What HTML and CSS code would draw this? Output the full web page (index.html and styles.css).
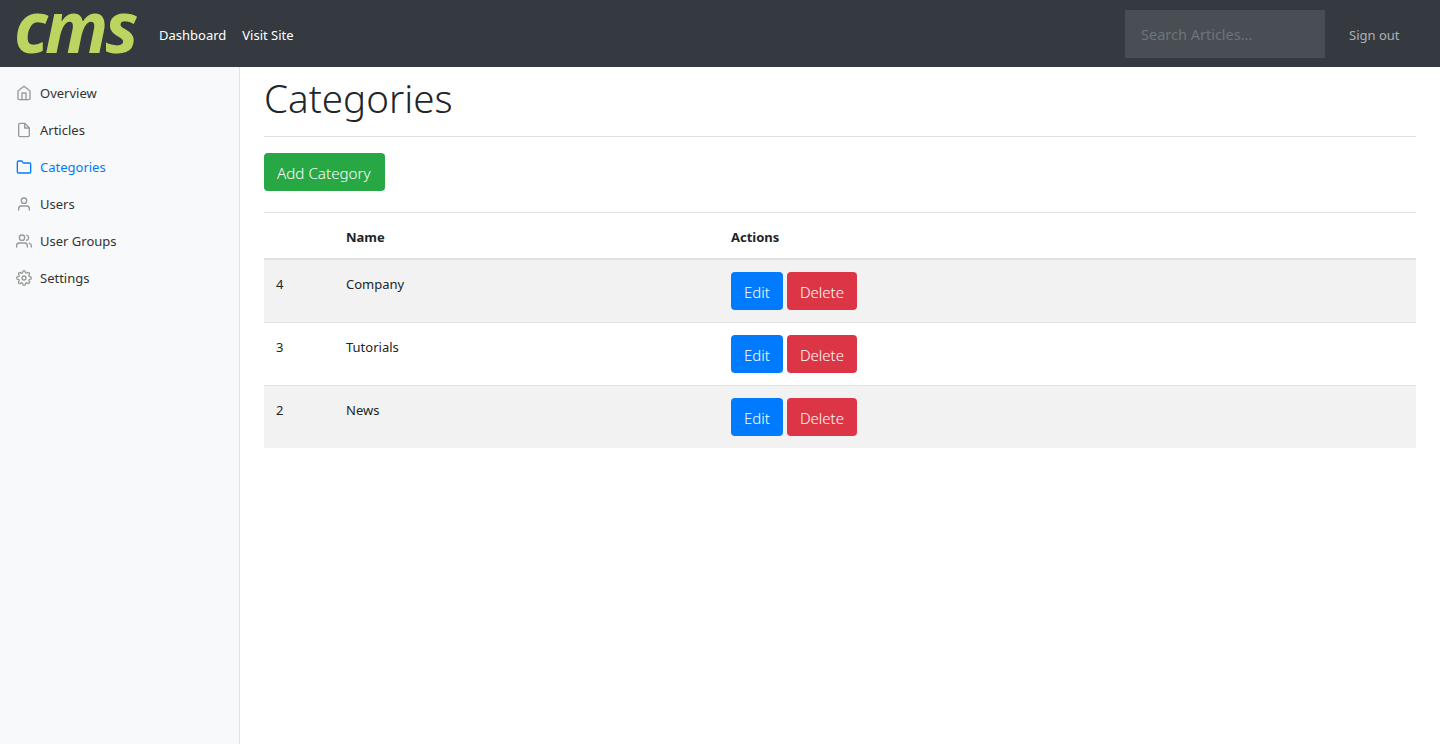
FILE: index.html
```html
<!DOCTYPE html>
<html lang="en">
<head>
<meta charset="utf-8">
<title>Categories</title>
<link rel="stylesheet" href="styles.css">
</head>
<body>
<header class="navbar">
  <a class="logo" href="#"><span class="logo-text">cms</span></a>
  <nav class="topnav"><a href="#">Dashboard</a><a href="#">Visit Site</a></nav>
  <input class="search" type="text" placeholder="Search Articles...">
  <a class="signout" href="#">Sign out</a>
</header>
<div class="layout">
  <aside class="sidebar">
    <a class="side-link" href="#"><svg class="icon" viewBox="0 0 24 24"><path d="M3 9l9-7 9 7v11a2 2 0 0 1-2 2H5a2 2 0 0 1-2-2z"/><path d="M9 22V12h6v10"/></svg>Overview</a>
    <a class="side-link" href="#"><svg class="icon" viewBox="0 0 24 24"><path d="M13 2H6a2 2 0 0 0-2 2v16a2 2 0 0 0 2 2h12a2 2 0 0 0 2-2V9z"/><path d="M13 2v7h7"/></svg>Articles</a>
    <a class="side-link active" href="#"><svg class="icon" viewBox="0 0 24 24"><path d="M22 19a2 2 0 0 1-2 2H4a2 2 0 0 1-2-2V5a2 2 0 0 1 2-2h5l2 3h9a2 2 0 0 1 2 2z"/></svg>Categories</a>
    <a class="side-link" href="#"><svg class="icon" viewBox="0 0 24 24"><path d="M20 21v-2a4 4 0 0 0-4-4H8a4 4 0 0 0-4 4v2"/><circle cx="12" cy="7" r="4"/></svg>Users</a>
    <a class="side-link" href="#"><svg class="icon" viewBox="0 0 24 24"><path d="M17 21v-2a4 4 0 0 0-4-4H5a4 4 0 0 0-4 4v2"/><circle cx="9" cy="7" r="4"/><path d="M23 21v-2a4 4 0 0 0-3-3.87"/><path d="M16 3.13a4 4 0 0 1 0 7.75"/></svg>User Groups</a>
    <a class="side-link" href="#"><svg class="icon" viewBox="0 0 24 24"><circle cx="12" cy="12" r="3"/><path d="M19.4 15a1.65 1.65 0 0 0 .33 1.82l.06.06a2 2 0 1 1-2.83 2.83l-.06-.06a1.65 1.65 0 0 0-2.82 1.17V21a2 2 0 1 1-4 0v-.09A1.65 1.65 0 0 0 7.2 19.7l-.06.06a2 2 0 1 1-2.83-2.83l.06-.06a1.65 1.65 0 0 0-1.17-2.82H3a2 2 0 1 1 0-4h.09A1.65 1.65 0 0 0 4.3 7.2l-.06-.06a2 2 0 1 1 2.83-2.83l.06.06a1.65 1.65 0 0 0 1.82.33H9a1.65 1.65 0 0 0 1-1.51V3a2 2 0 1 1 4 0v.09a1.65 1.65 0 0 0 2.82 1.17l.06-.06a2 2 0 1 1 2.83 2.83l-.06.06a1.65 1.65 0 0 0-.33 1.82V9a1.65 1.65 0 0 0 1.51 1H21a2 2 0 1 1 0 4h-.09a1.65 1.65 0 0 0-1.51 1z"/></svg>Settings</a>
  </aside>
  <main class="content">
    <h1 class="title">Categories</h1>
    <a class="btn green add" href="#">Add Category</a>
    <table class="table">
      <thead><tr><th class="col-id"></th><th class="col-name">Name</th><th>Actions</th></tr></thead>
      <tbody>
        <tr class="odd"><td>4</td><td>Company</td><td><div class="actions"><a class="btn blue" href="#">Edit</a><a class="btn red" href="#">Delete</a></div></td></tr>
        <tr><td>3</td><td>Tutorials</td><td><div class="actions"><a class="btn blue" href="#">Edit</a><a class="btn red" href="#">Delete</a></div></td></tr>
        <tr class="odd"><td>2</td><td>News</td><td><div class="actions"><a class="btn blue" href="#">Edit</a><a class="btn red" href="#">Delete</a></div></td></tr>
      </tbody>
    </table>
  </main>
</div>
</body>
</html>
```
FILE: styles.css
```css
* { box-sizing: border-box; }
html, body { margin: 0; height: 100%; }
body { font-family: "Noto Sans", "Open Sans", sans-serif; color: #212529; background: #fff; font-size: 13px; overflow: hidden; }
a { text-decoration: none; color: inherit; }
.navbar { height: 67px; background: #343a40; display: flex; align-items: center; }
.logo { width: 159px; height: 67px; padding-left: 14px; color: #bbd660; }
.logo-text { display: block; font-weight: 700; font-style: italic; font-size: 72px; line-height: 51px; letter-spacing: -3px; transform: scaleX(.97); transform-origin: left; }
.topnav { display: flex; gap: 16px; color: #fff; padding-top: 2px; }
.search { margin-left: auto; width: 200px; height: 48px; padding: 0 16px; border: 0; background: rgba(255,255,255,.1); font: 14.5px "Noto Sans", sans-serif; color: #fff; }
.search::placeholder { color: #6c757d; }
.signout { width: 115px; padding-left: 24px; padding-top: 2px; color: rgba(255,255,255,.6); }
.layout { display: flex; height: 677px; }
.sidebar { width: 240px; background: #f8f9fa; border-right: 1px solid #e1e3e6; padding-top: 7px; display: flex; flex-direction: column; }
.side-link { height: 37px; padding: 0 16px; display: flex; align-items: center; color: #333; }
.side-link.active { color: #007bff; }
.icon { width: 16px; height: 16px; margin-right: 8px; fill: none; stroke: #999; stroke-width: 2; stroke-linecap: round; stroke-linejoin: round; flex: none; }
.active .icon { stroke: #007bff; }
.content { flex: 1; padding: 0 24px; }
.title { margin: 0 0 16px; height: 70px; border-bottom: 1px solid #dee2e6; font-weight: 300; font-size: 38.6px; line-height: 63px; }
.btn { display: inline-block; height: 38px; line-height: 38px; padding: 0 13px; border-radius: 4px; color: #fff; font-size: 15px; font-weight: 300; }
.green { background: #28a745; }
.blue { background: #007bff; }
.red { background: #dc3545; }
.add { display: block; width: 121px; white-space: nowrap; font-size: 15.2px; line-height: 40px; }
.table { width: 100%; margin-top: 21px; border-collapse: collapse; border-top: 1px solid #dee2e6; }
.table th { height: 46px; text-align: left; padding: 3px 12px 0; border-bottom: 2px solid #dee2e6; font-weight: 700; }
.table td { height: 63px; vertical-align: top; padding: 12px; border-top: 1px solid #dee2e6; line-height: 24px; }
.col-id { width: 70px; }
.col-name { width: 385px; }
.odd { background: #f2f2f2; }
.actions { display: flex; gap: 4px; }
.actions .btn { line-height: 40px; }
```
